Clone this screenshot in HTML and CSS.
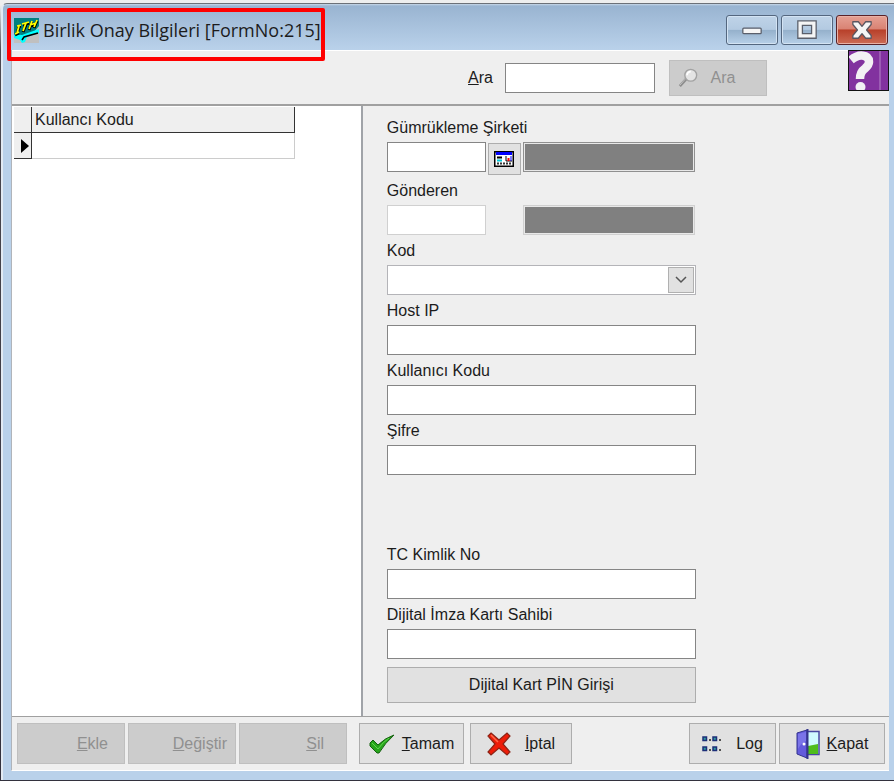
FILE: index.html
```html
<!DOCTYPE html>
<html lang="tr">
<head>
<meta charset="utf-8">
<title>Birlik Onay Bilgileri [FormNo:215]</title>
<link rel="stylesheet" href="styles.css">
</head>
<body>
<div class="window">
  <header class="titlebar">
    <svg class="app-icon" viewBox="0 0 25 25" aria-hidden="true">
      <rect width="25" height="25" fill="#c0c0c0"/>
      <path d="M0 0H25V8L20 14L8 20H0Z" fill="#008080"/>
      <path d="M0 16L8 17L25 11V15L13 19L11 24L8 25L6 22L0 20Z" fill="#00ffff"/>
      <path d="M8 22L10 19L24 15" fill="none" stroke="#000" stroke-width="1.500"/>
      <path d="M3 9L7 8M5 9L3 16M1 17L5 15M9 7L15 5M12 7L9 14M18 4L15 12M23 3L20 10M16 8L22 6" fill="none" stroke="#000" stroke-width="3"/>
      <path d="M3 8L7 7M5 8L3 15M1 16L5 14M8 6L15 4M12 5L9 13M18 3L15 11M23 2L20 9M16 7L22 5" fill="none" stroke="#ffff00" stroke-width="1.800"/>
    </svg>
    <h1 class="title">Birlik Onay Bilgileri [FormNo:215]</h1>
    <div class="controls">
      <button class="control" type="button" aria-label="Simge durumuna küçült">
        <svg viewBox="0 0 24 24"><rect x="2" y="10" width="20" height="6" rx="1" fill="#f5f5f5" stroke="#5a5f6b" stroke-width="1.400"/></svg>
      </button>
      <button class="control" type="button" aria-label="Ekranı kapla">
        <svg viewBox="0 0 24 24"><path fill-rule="evenodd" d="M2 2H22V21H2ZM7 7V16H17V7Z" fill="#f5f5f5" stroke="#5a5f6b" stroke-width="1.400"/></svg>
      </button>
      <button class="control control-close" type="button" aria-label="Pencereyi kapat">
        <svg viewBox="0 0 24 24"><path d="M2 3H8L12 8L16 3H22V6L17 12L22 18V21H16L12 16L8 21H2V18L7 12L2 6Z" fill="#f5f5f5" stroke="#5a5560" stroke-width="1.400" stroke-linejoin="round"/></svg>
      </button>
    </div>
    <div class="highlight"></div>
  </header>

  <main class="client">
    <form class="search">
      <label for="search"><u>A</u>ra</label>
      <input class="box search-box" id="search" type="text">
      <button class="button search-button" type="button" disabled>
        <svg class="lens" viewBox="0 0 22 22" aria-hidden="true">
          <path d="M2 20L10 11" stroke="#8d8d8d" stroke-width="3"/>
          <path d="M2 19L9 11" stroke="#c4c4c4" stroke-width="1"/>
          <circle cx="14" cy="8" r="6.500" fill="#e4e4e4" stroke="#a2a2a2" stroke-width="1.500"/>
          <path d="M10 8A4 4 0 0 1 14 4" fill="none" stroke="#fff" stroke-width="2"/>
        </svg>
        <span>Ara</span>
      </button>
      <button class="help" type="button" aria-label="Yardım">
        <svg viewBox="0 0 41 41">
          <rect width="41" height="41" fill="#82329f"/>
          <path d="M32 1V40" stroke="#9c5cb4" stroke-width="2"/>
          <path d="M3 10Q9 5 14 5.500Q21 6 21 12Q21 15 17 18.500Q12 22 12 29" fill="none" stroke="#f2f0f4" stroke-width="8.500"/>
          <circle cx="12.500" cy="37" r="5" fill="#f2f0f4"/>
          <rect x=".5" y=".5" width="40" height="40" fill="none" stroke="#111"/>
        </svg>
      </button>
    </form>

    <div class="panes">
      <section class="list">
        <table class="grid">
          <thead><tr><th class="marker" aria-label="Seçim"></th><th class="name">Kullancı Kodu</th></tr></thead>
          <tbody><tr><td class="marker"><svg viewBox="0 0 8 14" aria-hidden="true"><path d="M0 0L8 7L0 14Z"/></svg></td><td class="name"></td></tr></tbody>
        </table>
      </section>

      <form class="details">
        <div class="field">
          <label for="company">Gümrükleme Şirketi</label>
          <div class="lookup">
            <input class="box" id="company" type="text">
            <button class="button pick" type="button" aria-label="Şirket seç">
              <svg viewBox="0 0 20 16">
                <rect x=".75" y=".75" width="18.500" height="14.500" fill="#fff" stroke="#000" stroke-width="1.500"/>
                <path d="M2 2.500H18" stroke="#0000ff" stroke-width="3"/>
                <path d="M3 6.500H8" stroke="#000" stroke-width="2"/>
                <path d="M3 9.500H8" stroke="#00c8d8" stroke-width="2"/>
                <path d="M12 5V10H18" fill="none" stroke="#000"/>
                <path d="M14.500 7V10" stroke="#f00" stroke-width="2"/>
                <path d="M17 5V10" stroke="#00f"/>
                <path d="M3 12.500H17" stroke="#333" stroke-width="2" stroke-dasharray="2 1"/>
              </svg>
            </button>
            <input class="box shaded" type="text" aria-label="Şirket adı" readonly>
          </div>
        </div>
        <div class="field">
          <label for="sender">Gönderen</label>
          <div class="lookup">
            <input class="box faint" id="sender" type="text">
            <input class="box shaded faint" type="text" aria-label="Gönderen adı" readonly>
          </div>
        </div>
        <div class="field">
          <label for="code">Kod</label>
          <div class="combo">
            <select class="box" id="code"><option></option></select>
            <span class="arrow"><svg viewBox="0 0 12 8" aria-hidden="true"><path d="M1 1L6 6L11 1" fill="none" stroke="#555" stroke-width="1.500"/></svg></span>
          </div>
        </div>
        <div class="field">
          <label for="host">Host IP</label>
          <input class="box" id="host" type="text">
        </div>
        <div class="field">
          <label for="user">Kullanıcı Kodu</label>
          <input class="box" id="user" type="text">
        </div>
        <div class="field">
          <label for="password">Şifre</label>
          <input class="box" id="password" type="password">
        </div>
        <div class="field section">
          <label for="identity">TC Kimlik No</label>
          <input class="box" id="identity" type="text">
        </div>
        <div class="field">
          <label for="owner">Dijital İmza Kartı Sahibi</label>
          <input class="box" id="owner" type="text">
        </div>
        <button class="button pin" type="button">Dijital Kart PİN Girişi</button>
      </form>
    </div>

    <footer class="actions">
      <div class="edit">
        <button class="button trailing" type="button" disabled><span><u>E</u>kle</span></button>
        <button class="button trailing tight" type="button" disabled><span><u>D</u>eğiştir</span></button>
        <button class="button trailing loose" type="button" disabled><span><u>S</u>il</span></button>
      </div>
      <button class="button accept" type="button">
        <svg class="icon check" viewBox="0 0 26 20" aria-hidden="true"><path d="M1 9L4 6L9 11Q16 4 25 1Q16 9 10 19H8L1 12Z" fill="#27a51b" stroke="#14600f" stroke-width="1"/><path d="M3 9L9 15Q14 8 20 4" fill="none" stroke="#5fd44d" stroke-width="1"/></svg>
        <span><u>T</u>amam</span>
      </button>
      <button class="button cancel" type="button">
        <svg class="icon" viewBox="0 0 24 24" aria-hidden="true"><path d="M4 1L12 8L20 1L23 4L16 12L23 20L20 23L12 16L4 23L1 20L8 12L1 4Z" fill="#ee1c08" stroke="#8a2416" stroke-width="1.200"/><path d="M4 3L11 10" stroke="#ff6a4a" stroke-width="1.500"/></svg>
        <span><u>İ</u>ptal</span>
      </button>
      <div class="close">
        <button class="button log" type="button">
          <svg class="icon dots" viewBox="0 0 20 16" aria-hidden="true">
            <g fill="#2f9ea0" stroke="#1c2f78" stroke-width="1.500"><rect x="1" y="1" width="3.500" height="3.500"/><rect x="11" y="1" width="3.500" height="3.500"/><rect x="1" y="11" width="3.500" height="3.500"/><rect x="11" y="11" width="3.500" height="3.500"/></g>
            <path d="M7 4H9M17 4H19M7 14H9M17 14H19" stroke="#222" stroke-width="1.500"/>
          </svg>
          <span>Log</span>
        </button>
        <button class="button exit" type="button">
          <svg class="icon door" viewBox="0 0 24 30" aria-hidden="true">
            <rect x="11" y="2.500" width="12" height="23" fill="#cffaff" stroke="#4848a0" stroke-width="1.500"/>
            <path d="M12 17Q17 16 22 15V25H12Z" fill="#4fbd1c"/>
            <path d="M1 4L11 1V29L1 25Z" fill="#635bdc" stroke="#33338c" stroke-width="1"/>
            <path d="M2 5L10 3V12Q5 14 2 20Z" fill="#7a74e8"/>
            <path d="M11.500 0V30" stroke="#34348a" stroke-width="2"/>
            <circle cx="8" cy="15" r="1.500" fill="#fff"/>
          </svg>
          <span><u>K</u>apat</span>
        </button>
      </div>
    </footer>
  </main>
</div>
</body>
</html>
```
FILE: styles.css
```css
* { box-sizing: border-box; }

body {
  margin: 0;
  padding-top: 3px;
  min-height: 100vh;
  display: flex;
  background: linear-gradient(to bottom, #eeeeee 0, #eeeeee 5px, #4b4950 50px, #33323e 100%);
  font: 16px/20px "Liberation Sans", Arial, sans-serif;
  color: #1c1c1c;
}

button, input, select { font: inherit; color: inherit; margin: 0; }
svg { display: block; }

.window {
  flex: 1;
  display: flex;
  flex-direction: column;
  margin: 0 0 2px 1px;
  padding: 0 5px 9px 8px;
  border-top: 1px solid #6c7178;
  border-left: 2px solid #e2eaf3;
  border-top-left-radius: 6px;
  background: linear-gradient(to bottom, #c8d8e8 0, #99b4d1 2px, #b9d1ea 45px);
}

.titlebar {
  position: relative;
  display: flex;
  align-items: center;
  gap: 4px;
  height: 46px;
  padding: 6px 1px 0 3px;
}

.app-icon { width: 25px; height: 25px; }

.title {
  margin: 0;
  font: 400 18px/24px "Open Sans", "Noto Sans", sans-serif;
}

.controls {
  display: flex;
  gap: 3px;
  margin-left: auto;
}

.control {
  display: grid;
  place-items: center;
  width: 52px;
  height: 30px;
  padding: 0;
  border: 1px solid #54677f;
  border-radius: 3px;
  box-shadow: inset 0 0 0 1px #d3e3f3;
  background: linear-gradient(to bottom, #bfd3e8 0, #b3cae1 48%, #94b0cb 50%, #b7d0e8 100%);
}

.control svg { width: 22px; height: 22px; }

.control-close {
  border-color: #5a2228;
  box-shadow: inset 0 0 0 1px #e9b1a6;
  background: linear-gradient(to bottom, #e5a093 0, #d98374 46%, #b8402a 50%, #cc6c56 100%);
}

.highlight {
  position: absolute;
  top: 4px;
  left: -4px;
  width: 318px;
  height: 53px;
  border: 4px solid #ff0000;
  border-radius: 2px;
  pointer-events: none;
}

.client {
  flex: 1;
  display: flex;
  flex-direction: column;
  border-left: 1px solid #b0b4ba;
  border-bottom: 1px solid #ffffff;
  background: #efefef;
}

.search {
  display: flex;
  align-items: center;
  gap: 12px;
  height: 54px;
  padding-left: 52%;
  border-top: 1px solid #ffffff;
}

.box {
  display: block;
  width: 100%;
  min-width: 0;
  height: 30px;
  padding: 2px 4px;
  border: 1px solid #858585;
  border-radius: 0;
  background: #ffffff;
}

.search-box { width: 150px; }

.button {
  display: flex;
  align-items: center;
  justify-content: center;
  gap: 7px;
  height: 41px;
  padding: 0 6px;
  border: 1px solid #adadad;
  border-radius: 0;
  background: #e1e1e1;
}

.button:disabled {
  border-color: #bfbfbf;
  background: #cccccc;
  color: #909090;
}

.search-button {
  width: 98px;
  height: 36px;
  margin-left: 2px;
  gap: 12px;
  padding-right: 28px;
}

.lens { width: 20px; height: 20px; }

.help {
  align-self: flex-start;
  width: 41px;
  height: 41px;
  margin: -1px 0 0 auto;
  padding: 0;
  border: 0;
}

.panes {
  flex: 1;
  display: grid;
  grid-template-columns: minmax(0, 2fr) minmax(0, 3fr);
  border-top: 2px solid #a0a0a0;
  border-bottom: 1px solid #a0a0a0;
}

.list {
  padding: 1px 2px;
  border-right: 2px solid #a0a3a8;
  background: #ffffff;
}

.grid {
  width: 281px;
  table-layout: fixed;
  border-collapse: separate;
  border-spacing: 0;
}

.grid th, .grid td { height: 26px; padding: 0 3px; text-align: left; font-weight: 400; }
.grid th, .grid .marker { background: #efefef; border-right: 1px solid #333333; border-bottom: 1px solid #333333; }
.grid td.name { border-right: 1px solid #cccccc; border-bottom: 1px solid #cccccc; }
.grid .marker { width: 18px; padding: 0 0 0 7px; }
.grid .marker svg { width: 8px; height: 14px; }

.details {
  display: flex;
  flex-direction: column;
  gap: 6px;
  max-width: 334px;
  padding: 12px 1px 13px 24px;
}

.field { display: flex; flex-direction: column; gap: 4px; }
.field label { align-self: flex-start; }

.lookup {
  display: grid;
  grid-template-columns: 99px 33px 172px;
  column-gap: 2px;
}

.shaded {
  grid-column: 3;
  border-color: #909090;
  box-shadow: inset 0 0 0 1px #e8e8e8;
  background: #808080;
}

.faint { border-color: #d0d0d0; }
.pick { height: 32px; margin-top: 1px; padding: 0; }
.pick svg { width: 20px; height: 16px; }

.combo { position: relative; }
.combo .box { appearance: none; border-color: #b4b4b8; }

.arrow {
  position: absolute;
  top: 2px;
  right: 2px;
  display: grid;
  place-items: center;
  width: 26px;
  height: 26px;
  border: 1px solid #b0b0b0;
  background: #e1e1e1;
  pointer-events: none;
}

.arrow svg { width: 12px; height: 8px; }
.section { margin-top: 64px; }
.pin { height: 36px; margin-top: 2px; }

.actions {
  display: flex;
  align-items: center;
  gap: 6px;
  height: 53px;
  padding: 0 4px 0 5px;
}

.edit, .close { display: flex; gap: 3px; }
.edit { margin-right: 6px; }
.close { margin-left: auto; }

.trailing { width: 108px; justify-content: flex-end; padding-right: 16px; }
.tight { padding-right: 8px; }
.loose { padding-right: 22px; }
.icon { width: 24px; height: 24px; }
.check { width: 26px; height: 20px; }
.accept { width: 105px; }
.cancel { width: 102px; gap: 14px; }
.log { width: 87px; gap: 14px; }
.dots { width: 20px; height: 16px; }
.door { width: 24px; height: 30px; }
.exit { width: 106px; }
```
